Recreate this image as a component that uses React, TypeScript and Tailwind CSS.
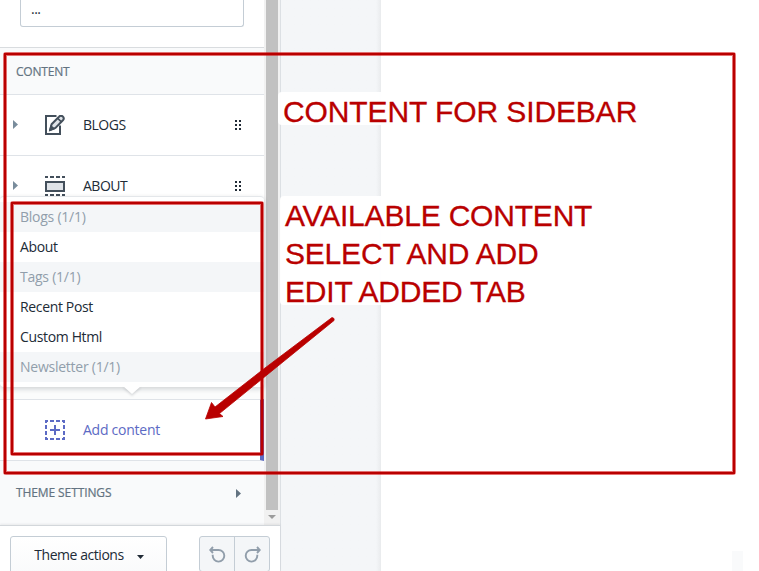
import React from "react";

const PencilIcon = () => (
  <svg width="20" height="20" viewBox="0 0 20 20" fill="none">
    <path d="M11.5 1H1v18h14v-8.5" stroke="#434f5b" strokeWidth="2" />
    <path d="M5 15.2l1.6-6L14 1.7a2.6 2.6 0 0 1 3.9 3.6l-7.4 7.6z" fill="#dfe3e8" stroke="#434f5b" strokeWidth="2" strokeLinejoin="round" />
    <path d="M5 15.2l1.1-4 2.8 2.6zM12.5 3.2l3.9 3.7" fill="#434f5b" stroke="#434f5b" strokeWidth="1.6" />
  </svg>
);

const SectionIcon = () => (
  <svg width="20" height="20" viewBox="0 0 20 20" fill="none" stroke="#434f5b" strokeWidth="2">
    <path d="M0 2V1h3M5 1h4M11 1h4M17 1h2v1M0 19h3M5 19h4M11 19h4M17 19h3" />
    <rect x="1" y="6" width="18" height="9" fill="#dfe3e8" />
  </svg>
);

const AddIcon = () => (
  <svg width="20" height="20" viewBox="0 0 20 20" fill="none" stroke="#5c6ac4" strokeWidth="2">
    <path d="M3 1H1v2M17 1h2v2M3 19H1v-2M17 19h2v-2M5 1h4M11 1h4M5 19h4M11 19h4M1 5v4M1 11v4M19 5v4M19 11v4" />
    <path d="M10 5v10M5 10h10" />
  </svg>
);

const DragHandle = () => (
  <svg width="7" height="10" viewBox="0 0 7 10" fill="#212b36" shapeRendering="crispEdges">
    <path d="M0 0h2v2H0zM4 0h2v2H4zM0 4h2v2H0zM4 4h2v2H4zM0 8h2v2H0zM4 8h2v2H4z" />
  </svg>
);

const Caret = ({ className }: { className: string }) => (
  <svg width="5" height="9" viewBox="0 0 5 9" className={className}>
    <path d="M0 0l5 4.5L0 9z" fill="currentColor" />
  </svg>
);

const UndoIcon = ({ className = "" }: { className?: string }) => (
  <svg width="17" height="17" viewBox="0 0 17 17" fill="none" stroke="#919eab" strokeWidth="1.9" className={className}>
    <path d="M1 4h8.500a5.800 5.800 0 1 1-5.800 5.800V8.800" />
    <path d="M4 1L1.200 4 4 7" />
  </svg>
);

function SectionRow({ icon, label }: { icon: React.ReactNode; label: string }) {
  return (
    <div className="flex h-[61px] shrink-0 items-center border-b border-[#dfe3e8] bg-white pb-px pl-[13px] pr-[22px]">
      <Caret className="-mt-px text-[#798c9c]" />
      <span className="ml-[27px]">{icon}</span>
      <span className="ml-[18px] grow text-[14px] tracking-[-0.5px]">{label}</span>
      <DragHandle />
    </div>
  );
}

const options = [
  { label: "Blogs (1/1)", used: true },
  { label: "About", used: false },
  { label: "Tags (1/1)", used: true },
  { label: "Recent Post", used: false },
  { label: "Custom Html", used: false },
  { label: "Newsletter (1/1)", used: true },
];

function ContentMenu() {
  return (
    <div className="absolute left-0 top-[196px] h-[191px] w-[264px] rounded border-t border-[#e4e7ea] bg-white pt-[5px] shadow-[0_2px_5px_rgba(33,43,54,0.2)]">
      {options.map((o) => (
        <div
          key={o.label}
          className={
            "flex h-[30px] items-center pb-0.5 pl-5 text-[14px] " +
            (o.used ? "bg-[#f4f6f8] tracking-[-0.25px] text-[#919eab]" : "tracking-[-0.35px] text-[#212b36]")
          }
        >
          {o.label}
        </div>
      ))}
      <svg width="18" height="9" viewBox="0 0 18 9" className="absolute left-[123px] top-[189px] drop-shadow-[0_2px_1px_rgba(33,43,54,0.15)]">
        <path d="M0 0h18L9 8z" fill="white" />
      </svg>
    </div>
  );
}

function Sidebar() {
  return (
    <aside className="relative flex h-full w-[281px] shrink-0 flex-col border-r border-[#dce0e4] bg-white">
      <div className="flex h-[525px] shrink-0">
        <div className="flex w-[264px] flex-col bg-[#f9fafb]">
          <div className="h-[48px] shrink-0 border-b border-[#d9dcdf] bg-white pl-5 shadow-[0_1px_2px_rgba(33,43,54,0.08)]">
            <div className="h-[27px] w-[224px] rounded-b-[3px] border border-t-0 border-[#c4cdd5] pl-[10px] text-[14px] leading-[17px] tracking-[-0.5px]">...</div>
          </div>
          <div className="flex h-[47px] shrink-0 items-center border-b border-[#dfe3e8] bg-[#f9fafb] pl-4 pt-0.5 text-[12px] font-medium tracking-[-0.2px] text-[#637381] [-webkit-text-stroke:0.2px_#637381]">
            CONTENT
          </div>
          <SectionRow icon={<PencilIcon />} label="BLOGS" />
          <SectionRow icon={<SectionIcon />} label="ABOUT" />
          <div className="h-[182px] shrink-0 bg-[#fbfcfc]" />
          <div className="flex h-[62px] shrink-0 items-center border-y border-r-4 border-[#dfe3e8] border-r-[#5c6ac4] bg-white pl-[45px] text-[14px] text-[#5c6ac4]">
            <AddIcon />
            <span className="-mt-0.5 ml-[18px] tracking-[-0.25px]">Add content</span>
          </div>
          <div className="flex grow items-center pl-4 pr-[23px] text-[12px] font-medium tracking-[-0.1px] text-[#637381] [-webkit-text-stroke:0.2px_#637381]">
            <span className="grow">THEME SETTINGS</span>
            <Caret className="text-[#637381]" />
          </div>
        </div>
        <div className="flex w-4 flex-col items-center bg-[#f1f1f1]">
          <div className="h-[510px] w-3 bg-[#c1c1c1]" />
          <svg width="8" height="4" viewBox="0 0 8 4" className="mt-[5px]">
            <path d="M0 0h8L4 4z" fill="#9b9b9b" />
          </svg>
        </div>
      </div>
      <footer className="flex h-[46px] items-start justify-between overflow-hidden border-t border-[#d3d7db] bg-white pl-[10px] pr-[10px] pt-[10px] shadow-[0_-1px_2px_rgba(33,43,54,0.08)]">
        <button className="flex h-10 w-[157px] items-center rounded-[3px] border border-[#c4cdd5] bg-gradient-to-b from-white to-[#f9fafb] pb-1 pl-[23px] text-[14px]">
          <span className="w-[90px] whitespace-nowrap tracking-[-0.45px]">Theme actions</span>
          <svg width="7" height="4" viewBox="0 0 7 4" className="ml-[13px] mt-1.5">
            <path d="M0 0h7L3.5 4z" fill="#212b36" />
          </svg>
        </button>
        <div className="flex h-9 w-[71px] rounded-[3px] border border-[#c4cdd5] bg-[#f4f6f8]">
          <div className="flex w-[35px] items-center justify-center border-r border-[#c4cdd5]">
            <UndoIcon />
          </div>
          <div className="flex w-[34px] items-center justify-center">
            <UndoIcon className="-scale-x-100" />
          </div>
        </div>
      </footer>
      <ContentMenu />
    </aside>
  );
}

function Annotations() {
  return (
    <div className="font-['Liberation_Sans',Arial,sans-serif] text-[30px] leading-[38px] text-[#b90000] [-webkit-text-stroke:0.3px_#b90000]">
      <div className="absolute left-[278px] top-[92px] h-[33px] w-[364px] whitespace-nowrap rounded bg-white/95 pl-[5px] leading-[40px] tracking-[-0.1px]">
        CONTENT FOR SIDEBAR
      </div>
      <div className="absolute left-[280px] top-[196px] h-[109px] w-[320px] whitespace-nowrap rounded bg-white/95 pl-[5px] pt-px tracking-[-0.2px]">
        <div>AVAILABLE CONTENT</div>
        <div>SELECT AND ADD</div>
        <div>EDIT ADDED TAB</div>
      </div>
      <svg width="759" height="571" viewBox="0 0 759 571" className="absolute left-0 top-0" fill="none">
        <rect x="5" y="54" width="729" height="419" stroke="#d00000" strokeOpacity=".55" strokeWidth="4" rx="1" />
        <rect x="5" y="54" width="729" height="419" stroke="#b90000" strokeWidth="2" />
        <rect x="12" y="203" width="250" height="251" stroke="#d00000" strokeOpacity=".55" strokeWidth="4" rx="1" />
        <rect x="12" y="203" width="250" height="251" stroke="#b90000" strokeWidth="2" />
        <path d="M332 317.500q3 .5 2 3L219.500 413.500l3.500 3-17.500 2.500 6-16.500 3.500 4.500L263 369.500z" fill="#b90000" stroke="#b90000" strokeWidth=".8" strokeLinejoin="round" />
      </svg>
    </div>
  );
}

export default function App() {
  return (
    <div className="relative flex h-[571px] w-[759px] overflow-hidden bg-white font-['Open_Sans','Noto_Sans',sans-serif] text-[#212b36]">
      <Sidebar />
      <div className="w-[100px] shrink-0 bg-gradient-to-r from-[#f4f6f8] from-95% to-[#e9ebed]" />
      <main className="flex grow items-end justify-end bg-white pr-4">
        <div className="h-5 w-[11px] bg-[#f9fafb]" />
      </main>
      <Annotations />
    </div>
  );
}
